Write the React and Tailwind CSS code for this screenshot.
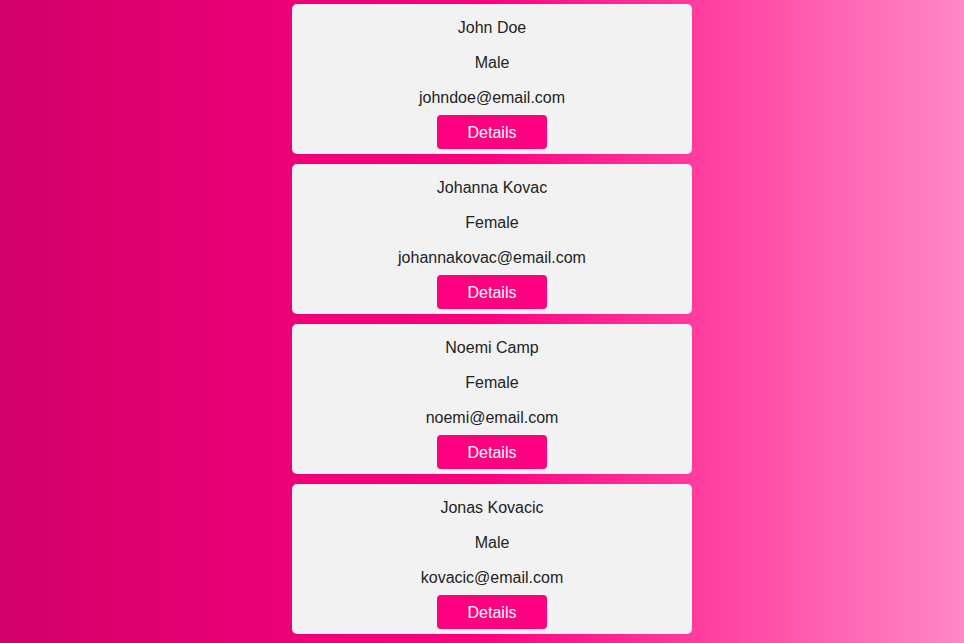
import React from 'react';

const users = [
    { name: 'John Doe', gender: 'Male', email: 'johndoe@email.com' },
    { name: 'Johanna Kovac', gender: 'Female', email: 'johannakovac@email.com' },
    { name: 'Noemi Camp', gender: 'Female', email: 'noemi@email.com' },
    { name: 'Jonas Kovacic', gender: 'Male', email: 'kovacic@email.com' },
];

const App = () => {
    return (
        <div className="min-h-screen w-full bg-[linear-gradient(to_right,#d2006a,#ff0080_50%,#ff88c6)] font-['Liberation_Sans',Arial,sans-serif] text-[16px] text-[#222]">
            <div className="flex flex-col items-center gap-[10px] pt-[4px] pb-[10px] pl-[20px]">
                {users.map((u) => (
                    <div key={u.email} className="w-[400px] h-[150px] bg-[#f2f2f2] rounded-[5px] flex flex-col items-center pt-[14px] pb-[5px]">
                        <p className="leading-[19px]">{u.name}</p>
                        <p className="leading-[19px] mt-[16px]">{u.gender}</p>
                        <p className="leading-[19px] mt-[16px]">{u.email}</p>
                        <button className="mt-[8px] w-[110px] h-[34px] bg-[#ff0080] text-white rounded-[4px] text-[16px] leading-[34px] pt-[1px]">
                            Details
                        </button>
                    </div>
                ))}
            </div>
        </div>
    );
};

export default App;
